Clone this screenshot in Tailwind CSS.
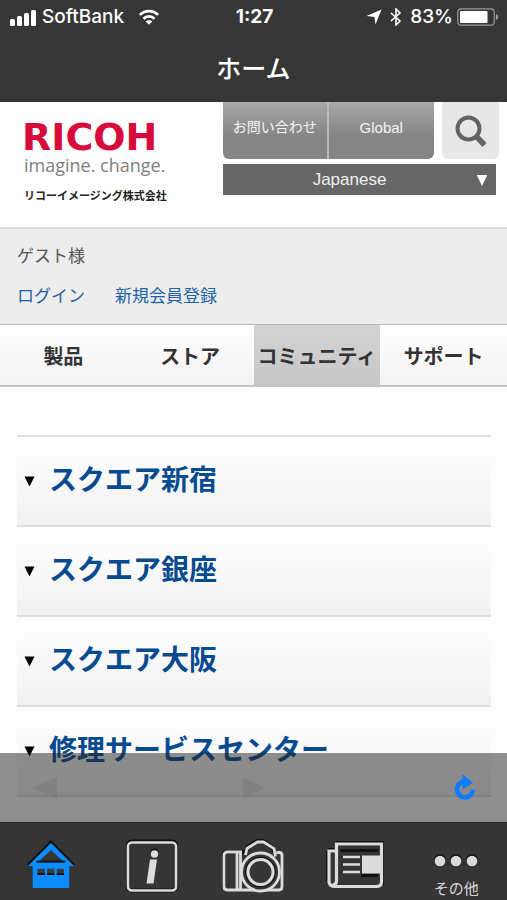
<!DOCTYPE html>
<html lang="ja">
<head>
<meta charset="utf-8">
<meta name="viewport" content="width=device-width, initial-scale=1">
<title>ホーム</title>
<script src="https://cdn.jsdelivr.net/npm/@tailwindcss/browser@4"></script>
</head>
<body class="flex h-screen flex-col overflow-hidden bg-[#fdfdfd] font-['Liberation_Sans','Noto_Sans_CJK_JP',sans-serif]">

  <!-- Status bar and title -->
  <header class="shrink-0 bg-[#363636] text-white">
    <div class="grid h-[34px] grid-cols-[1fr_auto_1fr] items-center pr-2 pl-2.5 font-['Inter',sans-serif] text-[19px] font-medium">
      <div class="flex items-center gap-1.5">
        <svg class="h-[17px] w-[26px]" viewBox="0 0 26 17" fill="currentColor" aria-hidden="true">
          <rect x="0" y="10" width="5" height="7" rx="1.5"/><rect x="7" y="7" width="5" height="10" rx="1.5"/><rect x="14" y="4" width="5" height="13" rx="1.5"/><rect x="21" y="1" width="5" height="16" rx="1.5"/>
        </svg>
        <span>SoftBank</span>
        <svg class="ml-2 h-[16px] w-[22px]" viewBox="0 0 24 17" fill="none" stroke="currentColor" stroke-width="3" aria-hidden="true">
          <path d="M2 6.2C7.500 .6 16.500 .6 22 6.200"/><path d="M6 10.400c3.300-3.300 8.700-3.300 12 0"/><path d="M12 17l-3.600-3.600c2-1.900 5.200-1.900 7.200 0z" fill="currentColor" stroke="none"/>
        </svg>
      </div>
      <span class="font-bold">1:27</span>
      <div class="flex items-center justify-end gap-2">
        <svg class="h-4 w-4" viewBox="0 0 16 16" fill="currentColor" aria-hidden="true"><path d="M15.500 .5L9.500 15.500 8.500 8 .5 7z"/></svg>
        <svg class="h-[18px] w-3" viewBox="0 0 12 18" fill="none" stroke="currentColor" stroke-width="1.600" aria-hidden="true"><path d="M1 5l9 8-4 4V1l4 4-9 8"/></svg>
        <span>83%</span>
        <svg class="-ml-1 h-[18px] w-[42px]" viewBox="0 0 42 18" aria-hidden="true">
          <rect x=".8" y=".8" width="36.500" height="16.400" rx="3.500" fill="none" stroke="#999" stroke-width="1.200"/><rect x="3" y="3" width="27.500" height="12" rx="1" fill="#fff"/><path d="M39 6c3 1 3 5 0 6z" fill="#999"/>
        </svg>
      </div>
    </div>
    <h1 class="flex h-[68px] items-center justify-center pt-1 text-[25px] font-medium">ホーム</h1>
  </header>

  <main class="relative min-h-0 flex-1 overflow-hidden">
    <div class="flex h-[125px] justify-between bg-white pr-2">
      <a href="#" class="flex flex-col pt-4 pl-[22px]">
        <span class="font-['DejaVu_Sans',sans-serif] text-[38px] leading-[38px] font-bold text-[#d80a3c]">RICOH</span>
        <span class="pl-[2px] font-['Open_Sans',sans-serif] text-[18px] leading-[18px] text-[#808080]">imagine. change.</span>
        <span class="mt-3.5 pl-[2px] text-[11px] leading-4 font-bold whitespace-nowrap text-[#222]">リコーイメージング株式会社</span>
      </a>
      <div class="flex w-[276px] flex-col gap-[5px]">
        <div class="flex h-[57px] justify-between">
          <div class="flex w-[211px] divide-x-2 divide-[#bbb] overflow-hidden rounded-b-md bg-linear-to-b from-[#a9a9a9] to-[#858585] to-60% text-white/90">
            <a href="#" class="flex w-1/2 justify-center pt-[15px] text-[14px] whitespace-nowrap">お問い合わせ</a>
            <a href="#" class="flex w-1/2 justify-center pt-[15px] text-[15px]">Global</a>
          </div>
          <button type="button" aria-label="検索" class="flex w-[57px] items-center justify-center rounded-b-md bg-[#e7e7e7]">
            <svg class="h-8 w-8" viewBox="0 0 32 32" fill="none" stroke="#626262" aria-hidden="true"><circle cx="13.500" cy="13.500" r="11" stroke-width="4"/><path d="M21 21l8.500 9" stroke-width="5.500"/></svg>
          </button>
        </div>
        <div class="relative mr-[3px]">
          <select aria-label="言語" class="block h-[31px] w-full appearance-none bg-[#666] pr-5 text-[17px] text-white/90 [text-align-last:center]">
            <option>Japanese</option>
          </select>
          <svg class="pointer-events-none absolute top-[11px] right-2 h-[11px] w-3" viewBox="0 0 12 11" fill="#fff" aria-hidden="true"><path d="M.8 0h10.400L6 11z"/></svg>
        </div>
      </div>
    </div>

    <section class="flex h-[98px] flex-col gap-3 border-t-2 border-b border-t-[#dedede] border-b-[#b5b5b5] bg-[#ededed] px-[17px] pt-3.5 text-[17px] leading-7">
      <p class="text-[#555]">ゲスト様</p>
      <div class="flex gap-[30px] text-[#1f62a8]">
        <a href="#">ログイン</a>
        <a href="#">新規会員登録</a>
      </div>
    </section>

    <nav class="grid h-[62px] grid-cols-4 border-b-2 border-[#c4c4c4] bg-linear-to-b from-white to-[#f3f3f3] text-[20px] font-bold whitespace-nowrap text-[#333]">
      <a href="#" class="flex items-center justify-center pt-1">製品</a>
      <a href="#" class="flex items-center justify-center pt-1">ストア</a>
      <a href="#" aria-current="page" class="flex items-center justify-center bg-linear-to-b from-[#d4d4d4] to-[#c6c6c6] pt-1">コミュニティ</a>
      <a href="#" class="flex items-center justify-center pt-1">サポート</a>
    </nav>

    <ul class="mr-4 ml-[17px] mt-12 border-t-2 border-[#e0e0e0] text-[28px] font-bold text-[#064a90]">
      <li class="h-[90px] border-b-2 border-[#dedede] bg-linear-to-b from-[#fdfdfd] from-20% to-[#f1f1f1]">
        <a href="#" class="flex h-full items-center gap-[14px] pl-[7px]"><svg class="h-[11px] w-[11px]" viewBox="0 0 11 11" aria-hidden="true"><path d="M.5 .5h10l-5 10z"/></svg>スクエア新宿</a>
      </li>
      <li class="h-[90px] border-b-2 border-[#dedede] bg-linear-to-b from-[#fdfdfd] from-20% to-[#f1f1f1]">
        <a href="#" class="flex h-full items-center gap-[14px] pl-[7px]"><svg class="h-[11px] w-[11px]" viewBox="0 0 11 11" aria-hidden="true"><path d="M.5 .5h10l-5 10z"/></svg>スクエア銀座</a>
      </li>
      <li class="h-[90px] border-b-2 border-[#dedede] bg-linear-to-b from-[#fdfdfd] from-20% to-[#f1f1f1]">
        <a href="#" class="flex h-full items-center gap-[14px] pl-[7px]"><svg class="h-[11px] w-[11px]" viewBox="0 0 11 11" aria-hidden="true"><path d="M.5 .5h10l-5 10z"/></svg>スクエア大阪</a>
      </li>
      <li class="h-[90px] border-b-2 border-[#dedede] bg-linear-to-b from-[#fdfdfd] from-20% to-[#f1f1f1]">
        <a href="#" class="flex h-full items-center gap-[14px] pl-[7px]"><svg class="h-[11px] w-[11px]" viewBox="0 0 11 11" aria-hidden="true"><path d="M.5 .5h10l-5 10z"/></svg>修理サービスセンター</a>
      </li>
    </ul>

    <!-- Translucent browser controls over the page -->
    <div class="absolute inset-x-0 bottom-0 grid h-[69px] grid-cols-[1fr_auto_1fr] items-center bg-[#222]/50 px-[30px]">
      <button type="button" disabled aria-label="戻る"><svg class="h-6 w-7" viewBox="0 0 28 24" fill="#000" fill-opacity=".06" aria-hidden="true"><path d="M1 12L27 1v22z"/></svg></button>
      <button type="button" disabled aria-label="進む"><svg class="h-6 w-6" viewBox="0 0 24 24" fill="#000" fill-opacity=".06" aria-hidden="true"><path d="M23 12L1 1v22z"/></svg></button>
      <button type="button" aria-label="再読み込み" class="justify-self-end"><svg class="h-[27px] w-6" viewBox="0 0 24 27" fill="#0a7cff" aria-hidden="true"><path d="M10.500 7.500A8 8 0 1 0 20 15.500" fill="none" stroke="#0a7cff" stroke-width="4.800"/><path d="M9.500 .5L20 8.500l-10.500 7z"/></svg></button>
    </div>
  </main>

  <footer class="grid h-[78px] shrink-0 grid-cols-5 border-t border-[#2a2a2a] bg-[#353535] text-[#d8d8d8]">
    <button type="button" aria-label="ホーム" class="flex items-start justify-center pt-4">
      <svg class="h-[52px] w-[50px]" viewBox="0 0 52 52" aria-hidden="true">
        <path d="M2 26L26 2l24 24" fill="none" stroke="#111" stroke-width="3"/>
        <path d="M26 3L50 27h-5v23H7V27H2z" fill="#0a8cff"/>
        <path d="M26 10.500L39 22.500H13z" fill="#353535"/><path d="M11 22.500h30" stroke="#111" stroke-width="2"/>
        <path d="M12 30h7.500v6.500H12zM22 30h7.500v6.500H22zM32 30h7.500v6.500H32z" fill="#3a3a3a"/><path d="M12 35.500h7.500M22 35.500h7.500M32 35.500h7.500" stroke="#111" stroke-width="2"/>
      </svg>
    </button>
    <button type="button" aria-label="情報" class="flex items-start justify-center pt-4">
      <svg class="h-[54px] w-[52px]" viewBox="0 0 52 54" aria-hidden="true">
        <rect x="2" y="2.500" width="48" height="49" rx="4" fill="none" stroke="#111" stroke-width="4"/>
        <rect x="2" y="3.500" width="48" height="48" rx="4" fill="none" stroke="#dcdcdc" stroke-width="2.600"/>
        <circle cx="28.500" cy="13.500" r="4" fill="#111"/><circle cx="28.500" cy="15" r="3.700" fill="#dcdcdc"/>
        <path d="M24 20.500h7l-3.500 24h-7z" fill="#dcdcdc"/>
      </svg>
    </button>
    <button type="button" aria-label="カメラ" class="flex items-start justify-center pt-4">
      <svg class="h-[54px] w-[62px]" viewBox="0 0 62 54" fill="none" aria-hidden="true">
        <g stroke="#111" stroke-width="4"><path d="M23.500 14l2-6.500L35 2h6l10 7 1 4.500"/><path d="M24 13H5q-3 0-3 3v33"/></g>
        <g stroke="#dcdcdc" stroke-width="2.800"><path d="M20 13H5.500q-3.500 0-3.500 3.500v31q0 3.500 3.500 3.500H57q3 0 3-3.500v-31q0-3-3-3h-2.500M23.500 16l1.500-6.500L35.500 3h6L52 9.500l1.500 8M15 13v38M18.500 13v38"/></g>
        <circle cx="38.500" cy="33" r="19" fill="#353535" stroke="#dcdcdc" stroke-width="2.800"/>
        <circle cx="38.500" cy="33" r="15" stroke="#111"/><circle cx="38.500" cy="33" r="12.500" stroke="#dcdcdc" stroke-width="3"/>
      </svg>
    </button>
    <button type="button" aria-label="ニュース" class="flex items-start justify-center pt-[18px]">
      <svg class="h-[48px] w-[58px]" viewBox="0 0 58 48" fill="none" aria-hidden="true">
        <path d="M9.500 2H56v42M2 9.500h6M2 10v30" stroke="#111" stroke-width="5"/>
        <path d="M10.500 10H3v30q0 5.500 6 5.500h41q5.500 0 5.500-4.500V3h-45v37q0 4-4 4" stroke="#dcdcdc" stroke-width="3.200"/>
        <path d="M14 9.500h38M35 34.500h17" stroke="#111" stroke-width="3"/>
        <path d="M17 16h17M17 23.500h17M17 31h17" stroke="#dcdcdc" stroke-width="2.600"/>
        <path d="M36 14.500h19v18H36z" fill="#dcdcdc"/>
      </svg>
    </button>
    <button type="button" class="flex flex-col items-center gap-1 pt-7 text-[15px] leading-7">
      <svg class="h-5 w-11" viewBox="0 0 44 20" aria-hidden="true">
        <g fill="#111"><circle cx="6" cy="8.500" r="5.500"/><circle cx="22" cy="8.500" r="5.500"/><circle cx="38" cy="8.500" r="5.500"/></g>
        <g fill="#dcdcdc"><circle cx="6" cy="10" r="5.300"/><circle cx="22" cy="10" r="5.300"/><circle cx="38" cy="10" r="5.300"/></g>
      </svg>
      <span>その他</span>
    </button>
  </footer>
</body>
</html>
